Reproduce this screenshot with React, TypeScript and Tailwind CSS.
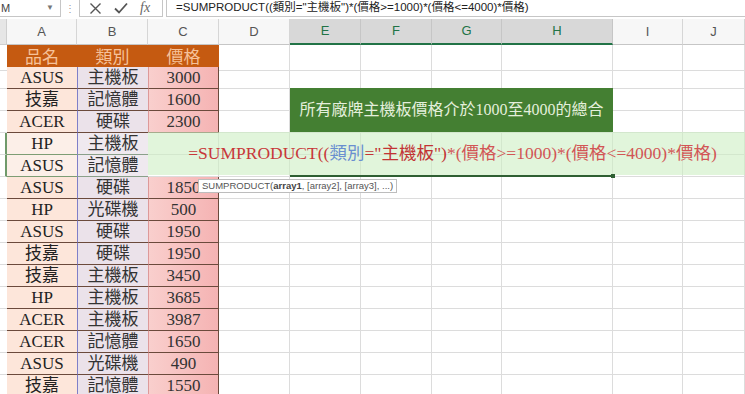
import React from "react";

const cols = "grid grid-cols-[7px_70px_71px_71px_71px_71px_71px_70px_111px_70px_1fr]";

type Row = { a: string; b: string; c: string };
const data: Row[] = [
  { a: "ASUS", b: "主機板", c: "3000" },
  { a: "技嘉", b: "記憶體", c: "1600" },
  { a: "ACER", b: "硬碟", c: "2300" },
  { a: "HP", b: "主機板", c: "" },
  { a: "ASUS", b: "記憶體", c: "" },
  { a: "ASUS", b: "硬碟", c: "1850" },
  { a: "HP", b: "光碟機", c: "500" },
  { a: "ASUS", b: "硬碟", c: "1950" },
  { a: "技嘉", b: "硬碟", c: "1950" },
  { a: "技嘉", b: "主機板", c: "3450" },
  { a: "HP", b: "主機板", c: "3685" },
  { a: "ACER", b: "主機板", c: "3987" },
  { a: "ACER", b: "記憶體", c: "1650" },
  { a: "ASUS", b: "光碟機", c: "490" },
  { a: "技嘉", b: "記憶體", c: "1550" },
];

const serif = "font-['Liberation_Serif','Noto_Sans_CJK_TC',serif]";
const sans = "font-['Liberation_Sans','Noto_Sans_CJK_TC',sans-serif]";

function Empty({ extra = "" }: { extra?: string }) {
  return <div className={`border-r border-b border-[#dcdcdc] ${extra}`} />;
}

export default function App() {
  const headers = ["A", "B", "C", "D", "E", "F", "G", "H", "I", "J"];
  return (
    <div className="relative w-[745px] h-[394px] overflow-hidden bg-white">
      {/* formula bar */}
      <div className={`flex h-[17px] items-stretch bg-white ${sans}`}>
        <div className="flex w-[61px] items-center justify-between border-b border-r border-[#c6c6c6] pl-[1px] pr-[6px] text-[11px] text-[#444]">
          <span>M</span>
          <span className="text-[8px] text-[#777]">▼</span>
        </div>
        <div className="flex w-[18px] items-center justify-center text-[10px] text-[#999]">⋮</div>
        <div className="flex w-[84px] items-center gap-[12px] border-b border-l border-r border-[#c6c6c6] pl-[9px] text-[#555]">
          <svg width="13" height="13" viewBox="0 0 13 13">
            <path d="M1.5 1.5 L11.5 11.5 M11.5 1.5 L1.5 11.5" stroke="#555" strokeWidth="1.4" fill="none" />
          </svg>
          <svg width="14" height="12" viewBox="0 0 14 12">
            <path d="M1 6.5 L5 10.5 L13 1.5" stroke="#555" strokeWidth="1.8" fill="none" />
          </svg>
          <span className="font-['Liberation_Serif',serif] text-[14px] italic leading-none text-[#666]">fx</span>
        </div>
        <div className="ml-[3px] flex flex-1 items-center border-b border-l border-[#c6c6c6] pl-[9px] text-[11.5px] text-[#222]">
          =SUMPRODUCT((類別="主機板")*(價格&gt;=1000)*(價格&lt;=4000)*價格)
        </div>
      </div>
      <div className="h-[2px] bg-white" />
      {/* column headers */}
      <div className={`${cols} h-[26px] bg-[#f7f7f7] ${sans} text-[13px] text-[#555]`}>
        <div className="border-r border-b border-[#cfcfcf] bg-[#e6e6e6]" />
        {headers.map((h, i) => {
          const sel = i >= 4 && i <= 7;
          return (
            <div
              key={h}
              className={`flex items-center justify-center border-r ${
                sel
                  ? "border-[#c6c6c6] border-b-2 border-b-[#217346] bg-[#d8d8d8] text-[#217346]"
                  : "border-[#d6d6d6] border-b border-b-[#c6c6c6]"
              }`}
            >
              {h}
            </div>
          );
        })}
      </div>
      {/* header row */}
      <div className={`${cols} h-[22px]`}>
        <div className="border-b border-[#dcdcdc]" />
        <div className={`col-span-3 flex bg-[#c55a11] ${serif} text-[17px] text-[#f6c29a]`}>
          <div className="flex w-[70px] items-center justify-center">品名</div>
          <div className="flex w-[71px] items-center justify-center">類別</div>
          <div className="flex w-[71px] items-center justify-center">價格</div>
        </div>
        <Empty />
        <Empty />
        <Empty />
        <Empty />
        <Empty />
        <Empty />
        <Empty />
      </div>
      {data.map((r, i) => {
        const under = i === 3 || i === 4;
        return (
          <div key={i} className={`${cols} h-[22px] ${serif} text-[17px] leading-none`}>
            <div className={`border-b ${under ? "border-[#dcdcdc] border-r-2 border-r-[#6f9a6a]" : "border-[#dcdcdc]"}`} />
            <div
              className={`flex items-center justify-center border-b text-[#222] ${
                under ? "border-[#7d9d74] bg-[#fcefe8]" : "border-[#6b4a3c] bg-[#fde6da]"
              }`}
            >
              {r.a}
            </div>
            <div
              className={`flex items-center justify-center border-b border-l border-l-[#7f7fc8] text-[#333] ${
                under ? "border-[#8aa08a] bg-[#efe9ef]" : "border-[#6b4a3c] bg-[#ebe2ea]"
              }`}
            >
              {r.b}
            </div>
            {r.c ? (
              <div className="flex items-center justify-center border-b border-l border-r border-[#6b4a3c] border-l-[#d99] bg-gradient-to-r from-[#f9cfcd] to-[#f5b3b3] text-[#333]">
                {r.c}
              </div>
            ) : (
              <Empty />
            )}
            <Empty />
            <Empty />
            <Empty />
            <Empty />
            <Empty />
            <Empty />
            <Empty />
          </div>
        );
      })}

      {/* merged green banner */}
      <div className={`absolute left-[290px] top-[88px] flex h-[44px] w-[323px] items-center justify-center bg-[#447f32] ${serif} text-[16px] text-[#e4efdc]`}>
        所有廠牌主機板價格介於1000至4000的總合
      </div>

      {/* formula overlay */}
      <div className={`absolute left-[148px] top-[132px] flex h-[43px] w-[597px] items-center justify-center bg-[rgba(205,238,195,0.6)] pl-[12px] ${serif} text-[17.5px] text-[#cf4a4a]`}>
        <span className="text-[#c8383a]">=SUMPRODUCT((</span>
        <span className="text-[#6a8fd0]">類別</span>
        <span className="text-[#c23434]">="主機板")</span>
        <span className="text-[#d25555]">*(價格&gt;=1000)*(價格&lt;=4000)*價格)</span>
      </div>

      {/* selection bottom line */}
      <div className="absolute left-[290px] top-[175px] h-[2px] w-[323px] bg-[#2f5f33]" />
      <div className="absolute left-[611px] top-[174px] h-[4px] w-[4px] bg-[#2f5f33]" />

      {/* tooltip */}
      <div className={`absolute left-[198px] top-[179px] flex h-[14px] items-center border border-[#bdbdbd] bg-white px-[3px] ${sans} text-[9.5px] text-[#555]`}>
        SUMPRODUCT(<b className="font-bold text-[#444]">array1</b>, [array2], [array3], ...)
      </div>
    </div>
  );
}
